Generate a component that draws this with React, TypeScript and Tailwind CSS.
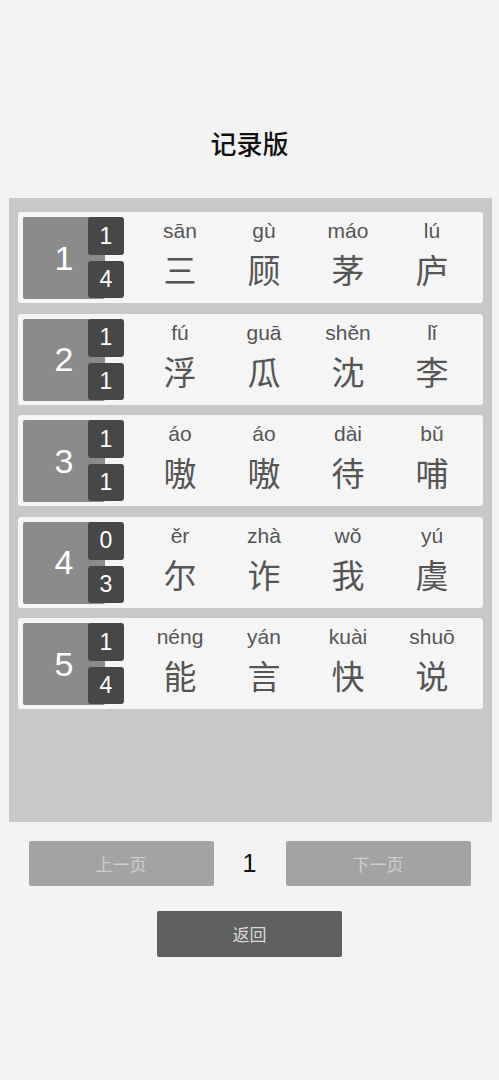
const rows = [
  { n: 1, a: 1, b: 4, chars: [["sān", "三"], ["gù", "顾"], ["máo", "茅"], ["lú", "庐"]] },
  { n: 2, a: 1, b: 1, chars: [["fú", "浮"], ["guā", "瓜"], ["shěn", "沈"], ["lǐ", "李"]] },
  { n: 3, a: 1, b: 1, chars: [["áo", "嗷"], ["áo", "嗷"], ["dài", "待"], ["bǔ", "哺"]] },
  { n: 4, a: 0, b: 3, chars: [["ěr", "尔"], ["zhà", "诈"], ["wǒ", "我"], ["yú", "虞"]] },
  { n: 5, a: 1, b: 4, chars: [["néng", "能"], ["yán", "言"], ["kuài", "快"], ["shuō", "说"]] },
];

const latin = { fontFamily: '"Liberation Sans", Arial, sans-serif' };
const cjk = { fontFamily: '"Noto Sans CJK SC", sans-serif' };

const App = () => {
  return (
    <div className="w-[499px] h-[1080px] bg-[#f3f3f3] flex flex-col items-center" style={cjk}>
      {/* Title */}
      <h1 className="mt-[125px] h-[36px] leading-[36px] text-[26px] font-medium text-[#111]">记录版</h1>

      {/* Record panel */}
      <div className="mt-[37px] self-start ml-[9px] w-[483px] h-[624px] bg-[#c8c8c8] pt-[14px] px-[9px] flex flex-col gap-[10.5px]">
        {rows.map((row) => (
          <div key={row.n} className="h-[91px] bg-[#f5f5f5] rounded-[3px] p-[5px] flex items-start">
            <div className="w-[82px] h-[82px] bg-[#8b8b8b] rounded-[2px] flex items-center justify-center text-white text-[34px]" style={latin}>
              {row.n}
            </div>
            <div className="ml-[-17px] w-[36px] flex flex-col gap-[6px]">
              <div className="h-[38px] bg-[#474747] rounded-[3px] flex items-center justify-center text-white text-[23px]" style={latin}>
                {row.a}
              </div>
              <div className="h-[37px] bg-[#474747] rounded-[3px] flex items-center justify-center text-white text-[23px]" style={latin}>
                {row.b}
              </div>
            </div>
            <div className="ml-[14px] w-[336px] grid grid-cols-4">
              {row.chars.map(([py, hz], i) => (
                <div key={i} className="flex flex-col items-center">
                  <span className="mt-[2px] h-[24px] leading-[24px] text-[21px] text-[#555]" style={latin}>{py}</span>
                  <span className="mt-[6px] h-[40px] leading-[40px] text-[33px] text-[#555]" style={cjk}>{hz}</span>
                </div>
              ))}
            </div>
          </div>
        ))}
      </div>

      {/* Pager */}
      <div className="mt-[19px] flex items-center">
        <button className="w-[185px] h-[45px] bg-[#a3a3a3] rounded-[2px] text-[17px] text-[#cdcdcd]">上一页</button>
        <span className="w-[72px] text-center text-[25px] text-[#111]" style={latin}>1</span>
        <button className="w-[185px] h-[45px] bg-[#a3a3a3] rounded-[2px] text-[17px] text-[#cdcdcd]">下一页</button>
      </div>

      <button className="mt-[25px] w-[185px] h-[46px] bg-[#606060] rounded-[2px] text-[17px] text-[#d8d8d8]">返回</button>
    </div>
  );
};

export default App;
